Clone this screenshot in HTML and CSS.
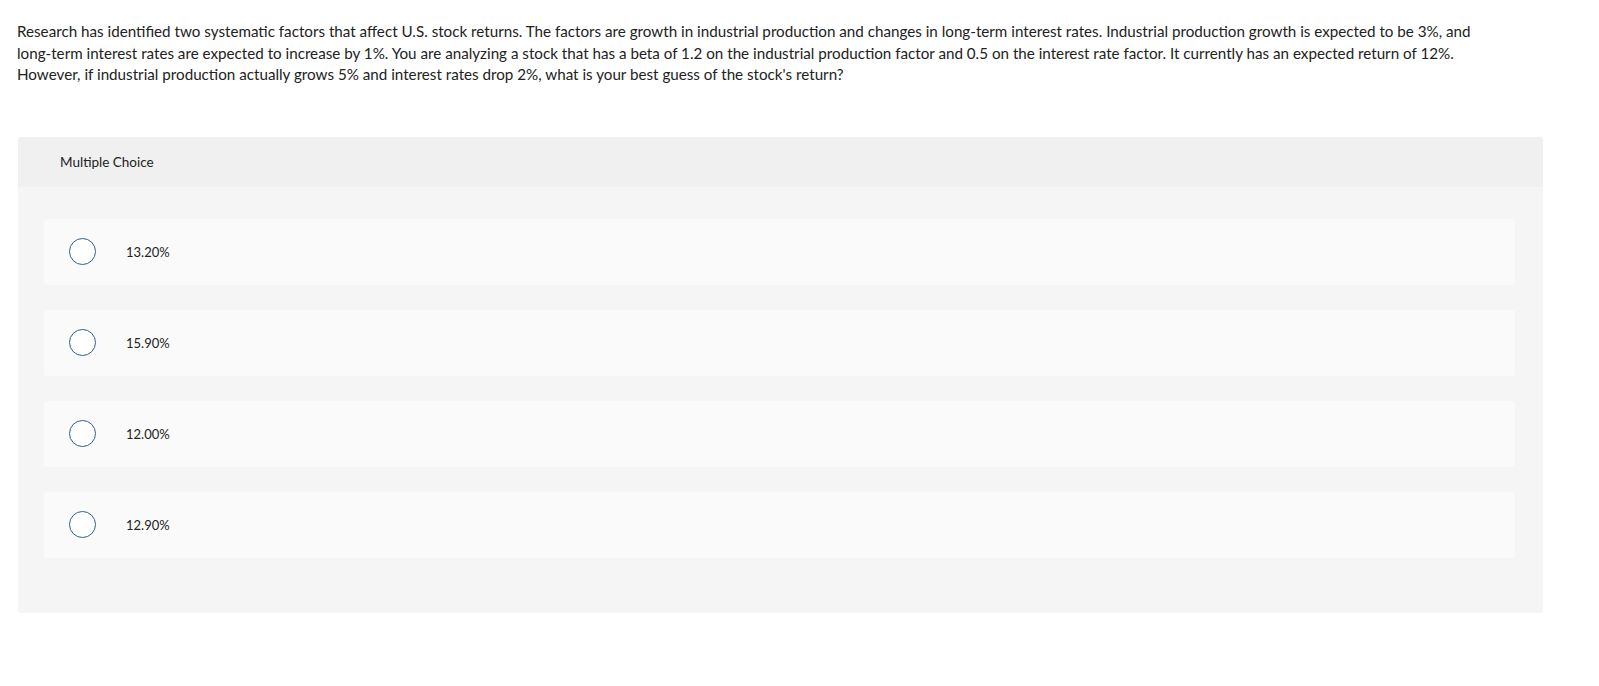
FILE: index.html
```html
<!DOCTYPE html>
<html>
<head>
<meta charset="utf-8">
<link rel="stylesheet" href="styles.css">
</head>
<body>
<div class="page">
  <p class="question">Research has identified two systematic factors that affect U.S. stock returns. The factors are growth in industrial production and changes in long-term interest rates. Industrial production growth is expected to be 3%, and long-term interest rates are expected to increase by 1%. You are analyzing a stock that has a beta of 1.2 on the industrial production factor and 0.5 on the interest rate factor. It currently has an expected return of 12%. However, if industrial production actually grows 5% and interest rates drop 2%, what is your best guess of the stock's return?</p>
  <div class="panel">
    <div class="panel-head">Multiple Choice</div>
    <div class="panel-body">
      <div class="option"><span class="radio"></span><span class="label">13.20%</span></div>
      <div class="option"><span class="radio"></span><span class="label">15.90%</span></div>
      <div class="option"><span class="radio"></span><span class="label">12.00%</span></div>
      <div class="option"><span class="radio"></span><span class="label">12.90%</span></div>
    </div>
  </div>
</div>
</body>
</html>
```
FILE: styles.css
```css
html, body { margin: 0; padding: 0; background: #fff; }
body { font-family: Lato, "Open Sans", sans-serif; color: #222; }
.page { padding: 21px 0 0 17px; width: 1526px; }
.question { margin: 0; font-size: 15.2px; line-height: 21.5px; width: 1478px; }
.panel { margin-top: 51px; margin-left: 1px; background: #f5f5f5; border-radius: 3px; overflow: hidden; }
.panel-head { height: 50px; background: #f0f0f0; display: flex; align-items: center; padding-left: 42px; font-size: 13.5px; color: #222; }
.panel-body { padding: 32px 28px 55px 26px; display: flex; flex-direction: column; gap: 25px; }
.option { height: 66px; background: #fafafa; border-radius: 3px; display: flex; align-items: center; padding-left: 25px; }
.radio { width: 25px; height: 25px; border: 1.5px solid #2f5f8f; border-radius: 50%; background: #fff; flex: none; }
.label { margin-left: 30px; font-size: 13px; color: #222; }
```
